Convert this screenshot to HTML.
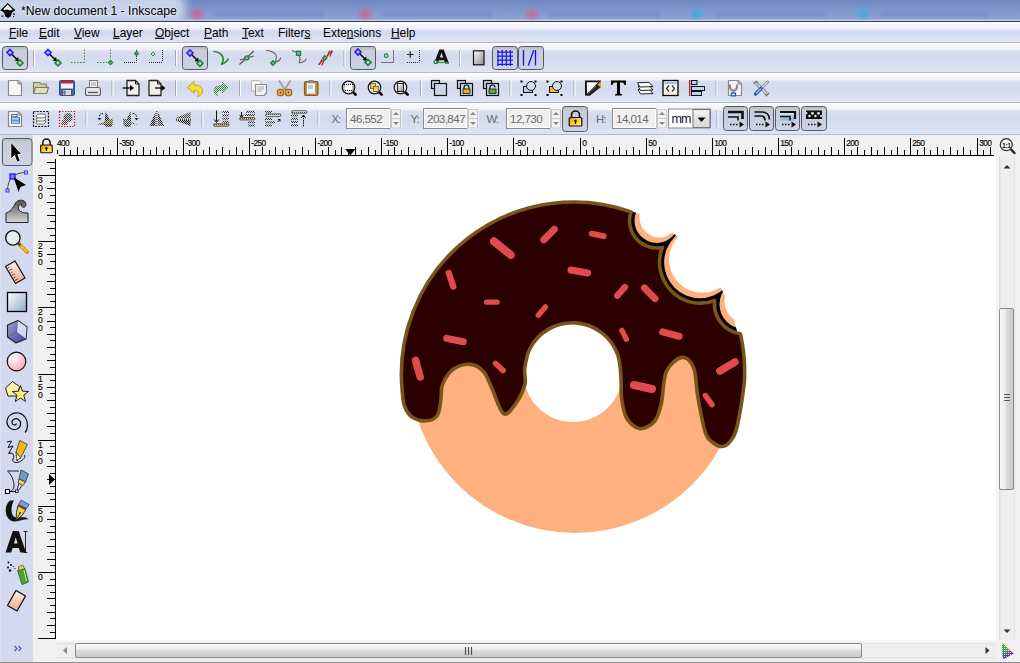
<!DOCTYPE html>
<html><head><meta charset="utf-8">
<style>
*{margin:0;padding:0;box-sizing:border-box}
html,body{width:1020px;height:663px;overflow:hidden;background:#f0f0f0;font-family:"Liberation Sans",sans-serif;position:relative}
.abs{position:absolute}
#title{left:0;top:0;width:1020px;height:22px;background:linear-gradient(#7088c2 0,#7f96cb 8px,#869cd0 15px,#8fa3d4 19px,#c3cfea 20px,#2f3749 21px,#3d4659 22px);overflow:hidden}
#title .glow{position:absolute;left:-20px;top:-6px;width:205px;height:30px;background:#c9d2e8;filter:blur(4px);border-radius:10px}
#title .blob{position:absolute;width:12px;height:10px;border-radius:50%;filter:blur(2.5px);top:9px}
#title .tab{position:absolute;top:12px;height:5px;background:#6d84bf;filter:blur(2px);opacity:.6}
.bar{position:absolute;left:0;width:1020px;background:linear-gradient(#fcfdfe 0,#eceff8 7px,#d8deef 8px,#d4daee 55%,#dfe5f5 100%);border-bottom:1px solid #b5bacb}
#menu{top:22px;height:21px}
#menu span{position:absolute;top:3px;font-size:12.5px;color:#000;white-space:nowrap}
#tb1{top:43px;height:30px}
#tb2{top:73px;height:30px}
#tb3{top:103px;height:32px}
.sep{position:absolute;width:2px;height:22px;background:linear-gradient(90deg,#a9aebb 50%,#fbfcff 50%)}
.btn{position:absolute;width:26px;height:24px;border:1px solid #5b5f68;border-radius:3px;background:linear-gradient(#e3e6ee,#c5cad8)}
#toolbox{left:0;top:135px;width:33px;height:528px;background:linear-gradient(90deg,#e4e8f6 0,#d3d9ee 1px,#d3d9ee 100%)}
#canvas{left:56px;top:157px;width:940px;height:483px;background:#fff}
.lbl{font-size:12px;color:#6b6b6b}
.inp{position:absolute;top:108px;height:21px;width:46px;background:#f0f0f0;border:1px solid #a9abb0;font-size:12.5px;color:#6e6e6e;padding:2px 0 0 3px}
.spin{position:absolute;top:108px;height:21px;width:11px;border:1px solid #c3c6cc;background:#f3f3f3}
svg{position:absolute;overflow:visible}
</style></head><body>
<div id="title" class="abs"><div class="glow"></div>
<div class="blob" style="left:191px;background:#c86a94"></div><div class="blob" style="left:359px;background:#c86a94"></div><div class="blob" style="left:526px;background:#c07098"></div>
<div class="blob" style="left:691px;background:#48a8d8"></div><div class="blob" style="left:857px;background:#48a8d8"></div>
<div class="tab" style="left:215px;width:110px"></div><div class="tab" style="left:383px;width:110px"></div><div class="tab" style="left:550px;width:110px"></div><div class="tab" style="left:715px;width:110px"></div><div class="tab" style="left:880px;width:110px"></div>
<div style="position:absolute;left:0;top:20px;width:1020px;height:1px;background:#c3cfea"></div><div style="position:absolute;left:0;top:21px;width:1020px;height:1px;background:#353d4f"></div>
</div>
<div id="menu" class="bar"></div>
<div id="tb1" class="bar"></div>
<div id="tb2" class="bar"></div>
<div id="tb3" class="bar"></div>
<div id="toolbox" class="abs"></div>
<div id="canvas" class="abs"></div>

<svg style="left:0;top:0" width="1020" height="663" viewBox="0 0 1020 663">
<defs><linearGradient id="bg" x1="0" y1="0" x2="0" y2="1"><stop offset="0" stop-color="#b9bdc7"/><stop offset=".22" stop-color="#cdd0d9"/><stop offset=".25" stop-color="#c6cbdf"/><stop offset="1" stop-color="#cdd2e4"/></linearGradient></defs>
<rect x="2.5" y="46.5" width="25.0" height="23.0" rx="3" fill="url(#bg)" stroke="#555a63" stroke-width="1"/>
<path d="M10.0 49.5 l3.0 3.0 l-3.0 3.0 l-3.0 -3.0 z" fill="#b4b4ff" stroke="#2222ee" stroke-width="1.6"/><path d="M12.0 54.5 L16.8 59.3" stroke="#000" stroke-width="1.4"/><path d="M19.0 61.5 L14.6 60.6 L18.1 57.1 Z" fill="#000"/><path d="M20.0 59.9 l3.0 3.0 l-3.0 3.0 l-3.0 -3.0 z" fill="#c8c8ff" stroke="#1f8a2a" stroke-width="1.6"/>
<rect x="33.0" y="50" width="1" height="16" fill="#a4a9b6"/><rect x="34.0" y="50" width="1" height="16" fill="#fcfdff"/>
<path d="M48.0 49.5 l3.0 3.0 l-3.0 3.0 l-3.0 -3.0 z" fill="#b4b4ff" stroke="#2222ee" stroke-width="1.6"/><path d="M50.0 54.5 L54.8 59.3" stroke="#000" stroke-width="1.4"/><path d="M57.0 61.5 L52.6 60.6 L56.1 57.1 Z" fill="#000"/><path d="M58.0 59.9 l3.0 3.0 l-3.0 3.0 l-3.0 -3.0 z" fill="#c8c8ff" stroke="#1f8a2a" stroke-width="1.6"/>
<g fill="none" stroke="#3a8a3a" stroke-width="1" stroke-dasharray="1.5 1.5"><path d="M71 62.5H84.5M84.5 49.5V62"/></g>
<g fill="none" stroke="#3a8a3a" stroke-width="1" stroke-dasharray="1.5 1.5"><path d="M97 62.5H107M110.5 49.5V59"/></g><path d="M110.5 60.3 l2.2 2.2 l-2.2 2.2 l-2.2 -2.2 z" fill="#a0a0a0" stroke="#1f8a2a" stroke-width="1.1"/>
<g fill="none" stroke="#222" stroke-width="1" stroke-dasharray="1 1"><path d="M124 62.5H136.5M136.5 50V62"/></g><path d="M136.5 51.5 l2.0 2.0 l-2.0 2.0 l-2.0 -2.0 z" fill="#9090c0" stroke="#1f8a2a" stroke-width="1.1"/>
<g fill="none" stroke="#222" stroke-width="1" stroke-dasharray="1 1"><path d="M149 62.5H162.5M162.5 50V62"/></g><path d="M153.0 52.0 l2.0 2.0 l-2.0 2.0 l-2.0 -2.0 z" fill="#e0e0ff" stroke="#1f8a2a" stroke-width="1.0"/>
<rect x="175.0" y="50" width="1" height="16" fill="#a4a9b6"/><rect x="176.0" y="50" width="1" height="16" fill="#fcfdff"/>
<rect x="182.5" y="46.5" width="25.0" height="23.0" rx="3" fill="url(#bg)" stroke="#555a63" stroke-width="1"/>
<path d="M190.0 50.0 l3.0 3.0 l-3.0 3.0 l-3.0 -3.0 z" fill="#b4b4ff" stroke="#2222ee" stroke-width="1.6"/><path d="M192.0 55.0 L196.8 59.8" stroke="#000" stroke-width="1.4"/><path d="M199.0 62.0 L194.6 61.1 L198.1 57.6 Z" fill="#000"/><path d="M200.0 60.4 l3.0 3.0 l-3.0 3.0 l-3.0 -3.0 z" fill="#c8c8ff" stroke="#1f8a2a" stroke-width="1.6"/>
<path d="M213.5 51.5C221 52 226 57.5 221.5 64.3C224 63.5 227 61.5 228.5 58.5" fill="none" stroke="#1a8c1a" stroke-width="1.6" stroke-linejoin="round"/>
<path d="M239.5 64.5L253.8 51M240 60L253.8 56" stroke="#555" stroke-width="1.1"/><circle cx="246.8" cy="57.9" r="2" fill="#9a9ae0" stroke="#1f8a2a" stroke-width="1.3"/>
<path d="M266 50.5C274 51 279 55 275 62M275 62C278 62 280 60 280.8 57.5" fill="none" stroke="#666" stroke-width="1.1"/><path d="M273.0 60.7 l2.3 2.3 l-2.3 2.3 l-2.3 -2.3 z" fill="#9a9ae0" stroke="#1f8a2a" stroke-width="1.3"/>
<path d="M292 50.5L298 52.8M299.5 63C304 62 306 60 306 58.5M298.5 55C301 58 300 61 299 63" fill="none" stroke="#666" stroke-width="1.1"/><rect x="296.5" y="51.3" width="4" height="4" fill="#9a9ae0" stroke="#1f8a2a" stroke-width="1.3"/>
<path d="M318.4 64.6L332.4 50.5" stroke="#555" stroke-width="1.1"/><g stroke="#e01010" stroke-width="1.2"><path d="M319.3 65L321.8 59.5M321.8 65.5L324.3 60M327.3 56L329.8 50.5M329.8 56.5L332.3 51"/></g><path d="M324.8 55.6 l2.2 2.2 l-2.2 2.2 l-2.2 -2.2 z" fill="#9a9ae0" stroke="#1f8a2a" stroke-width="1.3"/>
<rect x="343.5" y="50" width="1" height="16" fill="#a4a9b6"/><rect x="344.5" y="50" width="1" height="16" fill="#fcfdff"/>
<rect x="350.5" y="46.5" width="25.0" height="23.0" rx="3" fill="url(#bg)" stroke="#555a63" stroke-width="1"/>
<path d="M358.0 49.0 l3.0 3.0 l-3.0 3.0 l-3.0 -3.0 z" fill="#b4b4ff" stroke="#2222ee" stroke-width="1.6"/><path d="M360.0 54.0 L364.8 58.8" stroke="#000" stroke-width="1.4"/><path d="M367.0 61.0 L362.6 60.1 L366.1 56.6 Z" fill="#000"/><path d="M368.0 59.4 l3.0 3.0 l-3.0 3.0 l-3.0 -3.0 z" fill="#c8c8ff" stroke="#1f8a2a" stroke-width="1.6"/>
<path d="M381 62.5H394M393.5 50V63" fill="none" stroke="#777" stroke-width="1"/><circle cx="386.2" cy="55.7" r="1.8" fill="#c0c0ff" stroke="#1f8a2a" stroke-width="1.1"/>
<path d="M407 54.5H413.5M410.3 51.3V57.8" stroke="#222" stroke-width="1.2"/><g fill="none" stroke="#222" stroke-width="1" stroke-dasharray="1 1"><path d="M407 62.5H419.5M419.5 50V62"/></g>
<path d="M434 63.5L439.3 49.5H443.7L449 63.5H445.2L444.1 60.3H438.9L437.8 63.5ZM439.9 57.4H443.1L441.5 52.5Z" fill="#111" fill-rule="evenodd"/><path d="M435 62.5H448" stroke="#2a9a2a" stroke-width="1.2"/><circle cx="435.5" cy="62" r="1.6" fill="#c0c0ff" stroke="#1f8a2a" stroke-width="1.1"/>
<rect x="459.0" y="50" width="1" height="16" fill="#a4a9b6"/><rect x="460.0" y="50" width="1" height="16" fill="#fcfdff"/>
<defs><linearGradient id="pg" x1="0" y1="0" x2="1" y2="1"><stop offset="0" stop-color="#fff"/><stop offset="1" stop-color="#8a8a8a"/></linearGradient></defs><rect x="473.5" y="50.8" width="10.5" height="14" fill="url(#pg)" stroke="#111" stroke-width="1.2"/>
<rect x="492.5" y="46.5" width="25.0" height="23.0" rx="3" fill="url(#bg)" stroke="#555a63" stroke-width="1"/>
<g stroke="#1414f4" stroke-width="1.2"><path d="M498 50V66M502.2 50V66M506.3 50V66M510.4 50V66M497 52.2H513M497 56.2H513M497 60.2H513M497 64.4H513"/></g>
<rect x="518.5" y="46.5" width="25.0" height="23.0" rx="3" fill="url(#bg)" stroke="#555a63" stroke-width="1"/>
<g stroke="#1010f0" stroke-width="1.3"><path d="M523.5 50V65.5M535.5 50V65.5M528.3 65.5L533.7 50.3"/></g>
<path d="M8.5 80.5H18.0L21.5 84.0V95.5H8.5Z" fill="#f6f6f6" stroke="#8a8a8a" stroke-width="1.2" stroke-linejoin="round"/><path d="M18.0 80.5V84.0H21.5" fill="none" stroke="#8a8a8a" stroke-width="1"/>
<path d="M33.5 82.5H39.5L41 84H46.5V93.5H33.5Z" fill="#c9cda2" stroke="#7d805e" stroke-width="1.2"/><path d="M35.5 87.5H48.5L46.5 93.5H33.5Z" fill="#dde0bc" stroke="#7d805e" stroke-width="1.2" stroke-linejoin="round"/>
<rect x="59.5" y="80.5" width="15" height="15" rx="1.5" fill="#3d6ab8" stroke="#2a4f90"/><rect x="61" y="81" width="12" height="2.5" fill="#e8141c"/><rect x="61" y="83.5" width="12" height="5" fill="#f2f2f2"/><rect x="62.5" y="89.5" width="9" height="6" fill="#d8d8d8" stroke="#555" stroke-width="1"/><rect x="63.5" y="90.5" width="2" height="4" fill="#3d6ab8"/>
<rect x="89.5" y="80.5" width="8" height="8" fill="#f4f4f4" stroke="#777"/><path d="M91 83H96M91 85H96" stroke="#999" stroke-width="1"/><rect x="85.5" y="87.5" width="15" height="8" rx="2" fill="#e6e6e6" stroke="#666" stroke-width="1.2"/><path d="M88 92.5H98" stroke="#555" stroke-width="1.3"/>
<rect x="111.5" y="80" width="1" height="16" fill="#a4a9b6"/><rect x="112.5" y="80" width="1" height="16" fill="#fcfdff"/>
<path d="M127.0 80.5H135.5L139.0 84.0V95.5H127.0Z" fill="#f0efe8" stroke="#222" stroke-width="1.3" stroke-linejoin="round"/><path d="M135.5 80.5V84.0H139.0" fill="none" stroke="#222" stroke-width="1"/><path d="M122.5 88H131" stroke="#000" stroke-width="1.3"/><path d="M134 88L130 85V91Z" fill="#000"/>
<path d="M149.0 80.5H157.5L161.0 84.0V95.5H149.0Z" fill="#f0efe8" stroke="#222" stroke-width="1.3" stroke-linejoin="round"/><path d="M157.5 80.5V84.0H161.0" fill="none" stroke="#222" stroke-width="1"/><path d="M155 88H162" stroke="#000" stroke-width="1.3"/><path d="M165.5 88L161.5 85V91Z" fill="#000"/>
<rect x="175.0" y="80" width="1" height="16" fill="#a4a9b6"/><rect x="176.0" y="80" width="1" height="16" fill="#fcfdff"/>
<path d="M187.5 87.5L194 81.5V85C199 85 202.5 87 202.5 91C202.5 94 200 96 197.5 96.5C199.5 94.5 199 90.5 194 90.5V93.5Z" fill="#f3de38" stroke="#c6a60c" stroke-width="1" stroke-linejoin="round"/>
<defs><pattern id="chk" width="2" height="2" patternUnits="userSpaceOnUse"><rect width="1" height="1" fill="#3b8a2e"/><rect x="1" y="1" width="1" height="1" fill="#3b8a2e"/></pattern></defs><path d="M228.5 87.5L222 81.5V85C217 85 213.5 87 213.5 91C213.5 94 216 96 218.5 96.5C216.5 94.5 217 90.5 222 90.5V93.5Z" fill="url(#chk)"/>
<rect x="239.0" y="80" width="1" height="16" fill="#a4a9b6"/><rect x="240.0" y="80" width="1" height="16" fill="#fcfdff"/>
<path d="M251.5 80.5H259.5L261 82V91H251.5Z" fill="#f4f4f4" stroke="#b8b8b8"/><path d="M255.5 84.5H266.5V93L264 95.5H255.5Z" fill="#f2f2f2" stroke="#8a8a8a" stroke-width="1.2" stroke-linejoin="round"/><path d="M257.5 87H264M257.5 89H264M257.5 91H262" stroke="#aaa"/>
<path d="M279 80.5L285 90M290.5 80.5L284.5 90" stroke="#a0a0a0" stroke-width="1.8"/><rect x="277.5" y="89.5" width="6" height="6" rx="2" fill="#f0c070" stroke="#b06a14" stroke-width="1.5"/><rect x="285.5" y="89.5" width="6" height="6" rx="2" fill="#f0c070" stroke="#b06a14" stroke-width="1.5"/><circle cx="280.5" cy="92.5" r="1" fill="#6a3a00"/><circle cx="288.5" cy="92.5" r="1" fill="#6a3a00"/>
<rect x="304.5" y="81.5" width="13.5" height="14" rx="1.5" fill="#c4801e" stroke="#8c5a10" stroke-width="1.2"/><rect x="306.5" y="83" width="9" height="11" fill="#f4f4f4" stroke="#999" stroke-width=".8"/><rect x="308.5" y="80" width="5" height="2.5" fill="#888"/><path d="M308 86H313M308 88H313" stroke="#999"/>
<rect x="329.5" y="80" width="1" height="16" fill="#a4a9b6"/><rect x="330.5" y="80" width="1" height="16" fill="#fcfdff"/>
<path d="M352.5 91.5L355.7 94.7" stroke="#000" stroke-width="2.6" stroke-linecap="round"/><circle cx="348.5" cy="87.5" r="6.3" fill="#dfe6ee" stroke="#111" stroke-width="1.2"/><rect x="344" y="84.5" width="9" height="6" fill="#fff" stroke="#000" stroke-width="1" stroke-dasharray="1 1"/>
<path d="M378.5 91.5L381.7 94.7" stroke="#000" stroke-width="2.6" stroke-linecap="round"/><circle cx="374.5" cy="87.5" r="6.3" fill="#dfe6ee" stroke="#111" stroke-width="1.2"/><rect x="370.5" y="83.5" width="5" height="5" fill="#f8d040" stroke="#555" stroke-width=".8"/><rect x="373.5" y="86.5" width="5" height="5" fill="#f8d040" stroke="#555" stroke-width=".8"/>
<path d="M404.5 91.5L407.7 94.7" stroke="#000" stroke-width="2.6" stroke-linecap="round"/><circle cx="400.5" cy="87.5" r="6.3" fill="#dfe6ee" stroke="#111" stroke-width="1.2"/><rect x="397.5" y="83.5" width="6" height="8" fill="url(#pg)" stroke="#222" stroke-width="1"/>
<rect x="420.0" y="80" width="1" height="16" fill="#a4a9b6"/><rect x="421.0" y="80" width="1" height="16" fill="#fcfdff"/>
<rect x="431.5" y="80.5" width="8" height="8" fill="#b9cfe6" stroke="#111" stroke-width="1.2"/><rect x="434.5" y="83.5" width="12" height="12" fill="#c8d8ea" stroke="#111" stroke-width="1.2"/>
<rect x="457.5" y="80.5" width="8" height="8" fill="#b9cfe6" stroke="#111" stroke-width="1.2"/><rect x="460.5" y="83.5" width="12" height="12" fill="#c8d8ea" stroke="#111" stroke-width="1.2"/><path d="M464 89V87.5A2.5 2.5 0 0 1 469 87.5V89" fill="none" stroke="#111" stroke-width="1.2"/><rect x="463" y="89" width="7" height="4.5" fill="#f0b020" stroke="#111" stroke-width=".8"/>
<rect x="483.5" y="80.5" width="8" height="8" fill="#b9cfe6" stroke="#111" stroke-width="1.2"/><rect x="486.5" y="83.5" width="12" height="12" fill="#c8d8ea" stroke="#111" stroke-width="1.2"/><path d="M490 89V87.5A2.5 2.5 0 0 1 495 87.5" fill="none" stroke="#111" stroke-width="1.2"/><rect x="489" y="89" width="7" height="4.5" fill="#60b040" stroke="#111" stroke-width=".8"/>
<rect x="509.5" y="80" width="1" height="16" fill="#a4a9b6"/><rect x="510.5" y="80" width="1" height="16" fill="#fcfdff"/>
<rect x="523.5" y="86.5" width="9" height="6" fill="#b9cfe6" stroke="#111" stroke-width="1"/><circle cx="531" cy="86" r="4.5" fill="#cfdceb" stroke="#111" stroke-width="1"/><g fill="#000"><rect x="520.5" y="80.5" width="2" height="2"/><rect x="534.5" y="80.5" width="2" height="2"/><rect x="520.5" y="94" width="2" height="2"/><rect x="534.5" y="94" width="2" height="2"/></g>
<rect x="549.5" y="86.5" width="9" height="6" fill="#f0c030" stroke="#111" stroke-width="1"/><circle cx="557" cy="86" r="4.5" fill="#cfdceb" stroke="#111" stroke-width="1"/><g fill="#000"><rect x="546.5" y="80.5" width="2" height="2"/><rect x="560.5" y="80.5" width="2" height="2"/><rect x="546.5" y="94" width="2" height="2"/><rect x="560.5" y="94" width="2" height="2"/></g>
<rect x="573.5" y="80" width="1" height="16" fill="#a4a9b6"/><rect x="574.5" y="80" width="1" height="16" fill="#fcfdff"/>
<defs><linearGradient id="fsg" x1="0" y1="0" x2="1" y2="1"><stop offset="0" stop-color="#fff"/><stop offset=".6" stop-color="#f4f4f4"/><stop offset="1" stop-color="#888"/></linearGradient></defs><path d="M585 80.5H601V85L590 95.5H585Z" fill="#111"/><path d="M586.8 82.3H598.5L587 93.8Z" fill="url(#fsg)"/><path d="M586 95.5L598 84.5L601 87L590 95.5Z" fill="#222"/><path d="M589 92.5L596 86" stroke="#888" stroke-width=".8"/><path d="M597.5 84.5L601 81V88Z" fill="#f5a000"/>
<path d="M611 80.5H626V85H624.5C624 83 623 82.5 621 82.5H620V93.5L622 94.5V95.5H615V94.5L617 93.5V82.5H616C614 82.5 613 83 612.5 85H611Z" fill="#000"/>
<g fill="#fbfbfb" stroke="#222" stroke-width="1" stroke-linejoin="round"><path d="M638 89.5L649 89L653 93.5L640.5 94Z"/><path d="M638 86L649 85.5L653 90L640.5 90.5Z"/><path d="M637.5 82.8L649 82.3L653 86.6L640 87Z"/></g>
<rect x="663" y="80.5" width="15" height="15" fill="#f4f2ea" stroke="#000" stroke-width="1.3"/><rect x="664.3" y="81.8" width="12.4" height="2.2" fill="#9cc0e8"/><path d="M669 85.5L666.5 88.5L669 91.5M672 85.5L674.5 88.5L672 91.5" fill="none" stroke="#333" stroke-width="1.2"/>
<rect x="689" y="80" width="1.3" height="16" fill="#e01010"/><rect x="691.5" y="80.5" width="5.5" height="4" fill="#bcd4ee" stroke="#111" stroke-width="1"/><rect x="691.5" y="86.5" width="13" height="4" fill="#bcd4ee" stroke="#111" stroke-width="1"/><rect x="691.5" y="91.5" width="10" height="4" fill="#bcd4ee" stroke="#111" stroke-width="1"/>
<rect x="715.5" y="80" width="1" height="16" fill="#a4a9b6"/><rect x="716.5" y="80" width="1" height="16" fill="#fcfdff"/>
<path d="M728.5 80.5H738.0L741.5 84.0V95.5H728.5Z" fill="#f4f4f2" stroke="#8a8a8a" stroke-width="1.2" stroke-linejoin="round"/><path d="M738.0 80.5V84.0H741.5" fill="none" stroke="#8a8a8a" stroke-width="1"/><path d="M730 84.5V87A3.5 3.5 0 0 0 737 87V84.5" fill="none" stroke="#8a8a8a" stroke-width="2.2"/><path d="M733.5 90V94" stroke="#9a9a9a" stroke-width="2.6"/><path d="M731.5 93.2H735.5V95.8H731.5Z" fill="#fff" stroke="#2255bb" stroke-width="1.3"/>
<path d="M756.5 83.5L766.5 93.5" stroke="#7a7a7a" stroke-width="3.2"/><path d="M756.5 83.5L766.5 93.5" stroke="#dcdcd4" stroke-width="1.6"/><path d="M753.5 84L756 81.5L758 83M769 93L766.5 95.5L765 94" fill="none" stroke="#7a7a7a" stroke-width="1.6"/><path d="M767.5 82L762 87.5" stroke="#888" stroke-width="2.8" stroke-linecap="round"/><path d="M767.5 82L762 87.5" stroke="#e0e0e0" stroke-width="1.2"/><path d="M761 88.5L755.5 94" stroke="#2a5ec0" stroke-width="3.6" stroke-linecap="round"/><path d="M760.5 89L756.5 93" stroke="#9cc0ee" stroke-width="1.2" stroke-linecap="round"/>
<defs><pattern id="ck" width="2" height="2" patternUnits="userSpaceOnUse"><rect width="2" height="2" fill="#8a8a8a" opacity=".35"/><rect width="1" height="1" fill="#151515"/><rect x="1" y="1" width="1" height="1" fill="#151515"/></pattern><pattern id="ckl" width="2" height="2" patternUnits="userSpaceOnUse"><rect width="2" height="2" fill="#cfcfcf"/><rect width="1" height="1" fill="#444"/><rect x="1" y="1" width="1" height="1" fill="#444"/></pattern><pattern id="cky" width="2" height="2" patternUnits="userSpaceOnUse"><rect width="2" height="2" fill="#e8d090"/><rect width="1" height="1" fill="#444"/><rect x="1" y="1" width="1" height="1" fill="#555"/></pattern></defs>
<path d="M8.5 111.5H18.0L21.5 115.0V126.5H8.5Z" fill="#f6f6f6" stroke="#888" stroke-width="1.2" stroke-linejoin="round"/><path d="M18.0 111.5V115.0H21.5" fill="none" stroke="#888" stroke-width="1"/><g fill="#f4f8ff" stroke="#3a6cc0" stroke-width="1"><rect x="11.5" y="114.5" width="5.5" height="2.2"/><rect x="11.5" y="117.8" width="8" height="2.2"/><rect x="11.5" y="121" width="8" height="2.2"/></g>
<rect x="33.5" y="111.5" width="15" height="15" fill="none" stroke="#111" stroke-width="1.2" stroke-dasharray="2 1.2"/><g fill="#f8f8f8" stroke="#666" stroke-width=".9"><path d="M36 122L38 120H45L46 122L44 124H37Z"/><path d="M36 119L38 117H45L46 119L44 121H37Z"/><path d="M36 116L38 114H45L46 116L44 118H37Z"/></g>
<rect x="59.5" y="111.5" width="15" height="15" fill="none" stroke="#b01010" stroke-width="1.2" stroke-dasharray="1.2 1.6"/><path d="M61 125L62 120L66 119L68 125Z" fill="url(#cky)"/><circle cx="68" cy="117.5" r="4.5" fill="url(#ckl)"/>
<rect x="85.5" y="111" width="1" height="16" fill="#a4a9b6"/><rect x="86.5" y="111" width="1" height="16" fill="#fcfdff"/>
<path d="M105.6 111.2L110 120.5L104.5 123.5Z" fill="url(#ck)"/><path d="M96.5 124.5L103 122.5L112.8 118.2V124.2L105 125Z" fill="url(#cky)"/><path d="M104.5 124H112.5L111.5 126.8H106Z" fill="url(#ck)"/><path d="M103 113.5C100.5 113.2 99.5 114.5 99.5 117" fill="none" stroke="#222" stroke-width="1" stroke-dasharray="1.2 .6"/><path d="M97.5 118L99.5 120.2L101.5 118Z" fill="#222"/>
<path d="M130.6 111.2L131.2 123.5L125 123Z" fill="url(#ck)"/><path d="M123 118.5L131 120.5V125.5H123.5Z" fill="url(#ckl)"/><path d="M129.5 123L138 125L131 122Z" fill="url(#ck)"/><path d="M124 125H131L130.5 126.8H125Z" fill="url(#ck)"/><path d="M132.5 113.5C135 113.2 136.5 114.5 136.5 117" fill="none" stroke="#222" stroke-width="1" stroke-dasharray="1.2 .6"/><path d="M134.5 118L136.5 120.2L138.5 118Z" fill="#222"/>
<path d="M155.5 112L149.5 126H155.5Z" fill="url(#ck)"/><path d="M158 112L164 126H158Z" fill="url(#ck)"/><path d="M158.5 118L162 126H158.5Z" fill="url(#cky)"/><path d="M156.8 111V127" stroke="#222" stroke-dasharray="1 1"/>
<path d="M190.5 112L176.5 117.5V118.5H190.5Z" fill="url(#ckl)"/><path d="M190.5 126L176.5 121V120H190.5Z" fill="url(#ck)"/><path d="M176 119.3H191" stroke="#222" stroke-dasharray="1 1"/>
<rect x="201.5" y="111" width="1" height="16" fill="#a4a9b6"/><rect x="202.5" y="111" width="1" height="16" fill="#fcfdff"/>
<defs><pattern id="ckm" width="2" height="2" patternUnits="userSpaceOnUse"><rect width="1" height="1" fill="#2a2a2a"/><rect x="1" y="1" width="1" height="1" fill="#2a2a2a"/></pattern><pattern id="ckw" width="2" height="2" patternUnits="userSpaceOnUse"><rect width="2" height="2" fill="#f4f4f4"/><rect width="1" height="1" fill="#555"/></pattern><pattern id="cko" width="2" height="2" patternUnits="userSpaceOnUse"><rect width="2" height="2" fill="#e8c860"/><rect width="1" height="1" fill="#555"/></pattern></defs>
<path d="M216.5 110.5V121.5" stroke="#111" stroke-width="1"/><path d="M214.3 119.5L216.5 122.5L218.7 119.5" fill="none" stroke="#111" stroke-width="1"/><rect x="222.5" y="111.0" width="6.5" height="2" fill="url(#ckm)"/><rect x="222.5" y="114.3" width="6.5" height="2" fill="url(#ckm)"/><rect x="222.5" y="117.6" width="6.5" height="2" fill="url(#ckm)"/><rect x="222.5" y="120.8" width="6.5" height="2" fill="url(#ckm)"/><rect x="213.5" y="123.8" width="15.5" height="2.4" rx="1.2" fill="url(#cko)" stroke="#3a3a3a" stroke-width=".8"/>
<path d="M241.5 112V116.5" stroke="#111"/><path d="M239.8 115L241.5 117.5L243.2 115" fill="none" stroke="#111"/><rect x="246.0" y="110.8" width="9.0" height="2" fill="url(#ckm)"/><rect x="244.5" y="114.0" width="10.5" height="2" fill="url(#ckm)"/><rect x="239.5" y="117.5" width="15.5" height="2.4" rx="1.2" fill="url(#cko)" stroke="#3a3a3a" stroke-width=".8"/><rect x="248.0" y="121.3" width="7.0" height="2" fill="url(#ckm)"/><rect x="248.0" y="124.5" width="7.0" height="2" fill="url(#ckm)"/>
<rect x="265.0" y="110.8" width="7.0" height="2" fill="url(#ckm)"/><rect x="265.5" y="114.0" width="15.5" height="2.4" rx="1.2" fill="url(#ckw)" stroke="#3a3a3a" stroke-width=".8"/><rect x="265.0" y="118.0" width="7.0" height="2" fill="url(#ckm)"/><rect x="265.0" y="121.3" width="10.0" height="2" fill="url(#ckm)"/><rect x="265.0" y="124.5" width="7.0" height="2" fill="url(#ckm)"/><path d="M277.5 122L280 119.5M278 119.5H280V121.5" fill="none" stroke="#111" stroke-width="1"/>
<rect x="291.5" y="110.8" width="15.5" height="2.4" rx="1.2" fill="url(#ckw)" stroke="#3a3a3a" stroke-width=".8"/><rect x="291.0" y="114.5" width="7.0" height="2" fill="url(#ckm)"/><rect x="291.0" y="117.8" width="7.0" height="2" fill="url(#ckm)"/><rect x="291.0" y="121.0" width="7.0" height="2" fill="url(#ckm)"/><rect x="291.0" y="124.3" width="7.0" height="2" fill="url(#ckm)"/><path d="M303.5 115.5V127" stroke="#111" stroke-width="1" stroke-dasharray="1.5 .8"/><path d="M301.3 118L303.5 115L305.7 118" fill="none" stroke="#111" stroke-width="1"/>
<rect x="317.5" y="111" width="1" height="16" fill="#a4a9b6"/><rect x="318.5" y="111" width="1" height="16" fill="#fcfdff"/>
<defs><linearGradient id="rg" x1="0" y1="0" x2="1" y2="1"><stop offset="0" stop-color="#fdfdff"/><stop offset="1" stop-color="#8eacc8"/></linearGradient><radialGradient id="cg" cx=".35" cy=".3" r=".8"><stop offset="0" stop-color="#fff"/><stop offset="1" stop-color="#f5a0aa"/></radialGradient><linearGradient id="wg" x1="0" y1="0" x2="0" y2="1"><stop offset="0" stop-color="#505050"/><stop offset="1" stop-color="#d8d8d8"/></linearGradient><linearGradient id="eg" x1="0" y1="0" x2="0" y2="1"><stop offset="0" stop-color="#fdf0e8"/><stop offset="1" stop-color="#f0a888"/></linearGradient><linearGradient id="bx" x1="0" y1="0" x2="1" y2="1"><stop offset="0" stop-color="#9ea0d8"/><stop offset="1" stop-color="#3e3e90"/></linearGradient></defs>
<rect x="2.5" y="138.5" width="29.5" height="27.0" rx="3" fill="url(#bg)" stroke="#555a63" stroke-width="1"/>
<path d="M10.8 142V159L14.6 155.5L17 162.3L20.3 160.8L17.8 154.5H22Z" fill="#000" stroke="#fff" stroke-width=".9" stroke-linejoin="round"/>
<path d="M12.5 176.5C9 180 7.5 185 7.5 190.5M12.5 176.5C17 173.5 21 172.5 26 172.5" fill="none" stroke="#444" stroke-width="1"/><rect x="10" y="174" width="5" height="5" fill="#8080ff" stroke="#1515ee" stroke-width="1.3"/><rect x="24.5" y="171" width="3" height="3" fill="#c0c0ff" stroke="#3030f0" stroke-width=".9"/><rect x="6" y="189" width="3" height="3" fill="#c0c0ff" stroke="#3030f0" stroke-width=".9"/><path d="M13.5 177L26 185L20.5 187L18.5 192Z" fill="#000"/>
<path d="M6 222.5V213C10 212 13 208 15 204C17 200 21 199.5 24 201C26.5 202.5 26.5 206 24.5 207C23 208 20.5 206 22 204.5C19 204 17.5 207 19 210C20.5 212.5 24 213 28 213V222.5Z" fill="url(#wg)" stroke="#222" stroke-width="1"/>
<path d="M19.5 244.5L27 252" stroke="#d08a00" stroke-width="3.8" stroke-linecap="round"/><path d="M20.5 245.5L26.5 251.5" stroke="#f8c020" stroke-width="2.2" stroke-linecap="round"/><path d="M17.5 242.5L20.5 245.5" stroke="#555" stroke-width="2.5"/><circle cx="12.9" cy="237.9" r="7.2" fill="#e6eef4" stroke="#111" stroke-width="1.3"/>
<path d="M5.5 266.5L15 261L25 278L15.5 283.5Z" fill="url(#eg)" stroke="#111" stroke-width="1.2" stroke-linejoin="round"/><path d="M7.5 268L9.5 267M9 270.5L12 268.8M10.5 273L12.5 271.8M12 275.5L15 273.8M13.5 278L15.5 276.8M15 280.5L18 278.8" stroke="#333" stroke-width=".8"/>
<rect x="7.5" y="292.5" width="19" height="19" fill="url(#rg)" stroke="#000" stroke-width="1.3"/>
<path d="M7.5 325L18 320.5L27 327L26 339L16 343L7.5 337Z" fill="url(#bx)" stroke="#222" stroke-width="1.1" stroke-linejoin="round"/><path d="M18 320.5L16.5 332L26 339M16.5 332L7.5 337" fill="none" stroke="#555" stroke-width=".5"/><path d="M18 321L26.5 327L25.8 338.5L17 332Z" fill="#d8d8f0"/>
<circle cx="16.5" cy="361.5" r="9.3" fill="url(#cg)" stroke="#111" stroke-width="1.2"/>
<path d="M5.5 388L12.5 381.5L19.5 386.5L17.5 396H8Z" fill="#fbf2a8" stroke="#222" stroke-width="1" stroke-linejoin="round"/><path d="M20.5 385.5L22.5 391.2L28.5 391.5L23.8 395.2L25.5 401.5L20.5 398L15.2 401.5L17 395.2L12.3 391.5L18.5 391.2Z" fill="#fbef80" stroke="#222" stroke-width="1" stroke-linejoin="round"/>
<path d="M16.5 423.5C16 425.5 12.5 425.5 12 423C11.5 419.5 15.5 417.5 18.5 419.5C22 422 21 427.5 17 429C12 431 7 427 7 422C7 416 12.5 412 18.5 413C24.5 414 27.5 420 27.5 425C27.5 429 26.5 431 25 432.5" fill="none" stroke="#111" stroke-width="1.2"/>
<path d="M7 442L11.5 441L8 447.5L13 446L8.5 453.5C12 452 15.5 455 13 459C11.5 462 16 464 21 461C24 459 25.5 457 24.5 455" fill="none" stroke="#111" stroke-width="1"/><path d="M19.8 440.5L27.5 444.5L20 459L16 452Z" fill="#f8b818" stroke="#333" stroke-width=".8"/><path d="M16 452L20.5 457.5L17 461Z" fill="#fff8e0" stroke="#333" stroke-width=".8"/><path d="M16.5 459.5L17 461L18.2 459.8Z" fill="#000"/>
<path d="M7.5 471H19M7.5 471C11 474 14 480 14 486C14 489 12 491 10 491.5" fill="none" stroke="#222" stroke-width="1"/><rect x="5.5" y="489.5" width="4" height="4" fill="#fff" stroke="#000" stroke-width="1"/><path d="M9.5 491.5H16" stroke="#000"/><rect x="15.5" y="490" width="2.5" height="2.5" fill="#fff" stroke="#000" stroke-width=".8"/><path d="M21 470L28.5 474L25.5 482L19 479Z" fill="#6a9ec8" stroke="#333" stroke-width=".8"/><path d="M19 479L25.5 482L23 485.5L18 483Z" fill="#f0d070" stroke="#333" stroke-width=".8"/><path d="M19 483.5L17 490M22 485.5L18.5 490.5" stroke="#333" stroke-width="1"/>
<path d="M10 500.5C5.5 504 4.5 511 7 516.5C9 520.5 13 522.5 18 521C22 520 25 518.5 29 519.5C26 516.5 22 516.5 18.5 517.5C14 518.5 11.5 515 11.5 510C11.5 506 12.5 503 14 500.5Z" fill="#111"/><path d="M21 500L29 504.5L26.5 508.5L18.5 504.5Z" fill="#6aa8d8" stroke="#333" stroke-width=".7"/><path d="M18.5 504.5L26.5 508.5L25.8 509.8L17.8 505.8Z" fill="#d81818"/><path d="M17.8 505.8L25.8 509.8L22 515.5L16 520.5L16.5 512.5Z" fill="#f2cc50" stroke="#222" stroke-width=".9" stroke-linejoin="round"/><path d="M16.2 520L20 513" stroke="#222" stroke-width=".8"/><circle cx="20.2" cy="512.8" r=".9" fill="#222"/>
<path d="M5.5 552.5L12.8 531H18.8L26 552.5H20.3L18.9 548H12.6L11.2 552.5ZM13.9 543.5H17.6L15.75 537.2Z" fill="#111" fill-rule="evenodd"/><path d="M25.5 531.5V552.5M23.5 531.5H27.5M23.5 552.5H27.5" stroke="#111" stroke-width=".9"/>
<g fill="#111"><circle cx="8.5" cy="562.5" r="1"/><circle cx="11" cy="565" r="1"/><circle cx="8" cy="567.5" r="1.1"/><circle cx="10" cy="570.5" r="1.3"/><circle cx="13.5" cy="566.5" r=".6"/><circle cx="15" cy="568.5" r=".6"/></g><path d="M17.5 570.5L25 568.5L28.5 582L22 584.5Z" fill="#4aa23a" stroke="#2a5a20" stroke-width=".8"/><path d="M18.5 566.5L23 565.2L24.5 569L18.8 570.5Z" fill="#e8d040" stroke="#333" stroke-width=".6"/><path d="M24 570L26.5 581" stroke="#b8f0a0" stroke-width="1"/>
<path d="M7.5 605.5L16 590.5L25.5 596L17 611Z" fill="url(#eg)" stroke="#111" stroke-width="1.3" stroke-linejoin="round"/>
<path d="M14.5 646L17 648.5L14.5 651M18.5 646L21 648.5L18.5 651" fill="none" stroke="#5b5ba8" stroke-width="1.3"/>
<text x="331.5" y="123.2" font-family="Liberation Sans" font-size="11.3" fill="#6a6a6a" letter-spacing="-1">X:</text><rect x="346.5" y="108.5" width="44" height="20" fill="#f0f0f0" stroke="#8d8d8d"/><rect x="347.5" y="109.5" width="42" height="18" fill="none" stroke="#fff"/><text x="350.0" y="123.2" font-family="Liberation Sans" font-size="11.6" fill="#6a6a6a" letter-spacing="-.55">46,552</text><rect x="391.0" y="108.5" width="10" height="20" fill="#fff" stroke="#fff"/><rect x="391.5" y="109.5" width="9" height="9" fill="#f2f2f2" stroke="#c8c8c8"/><rect x="391.5" y="118.5" width="9" height="9.5" fill="#f2f2f2" stroke="#c8c8c8"/><path d="M393.0 115L396.0 112L399.0 115Z" fill="#8a8a8a"/><path d="M393.0 122L396.0 125L399.0 122Z" fill="#8a8a8a"/>
<text x="410.5" y="123.2" font-family="Liberation Sans" font-size="11.3" fill="#6a6a6a" letter-spacing="-1">Y:</text><rect x="423.5" y="108.5" width="44" height="20" fill="#f0f0f0" stroke="#8d8d8d"/><rect x="424.5" y="109.5" width="42" height="18" fill="none" stroke="#fff"/><text x="427.0" y="123.2" font-family="Liberation Sans" font-size="11.6" fill="#6a6a6a" letter-spacing="-.55">203,847</text><rect x="468.0" y="108.5" width="10" height="20" fill="#fff" stroke="#fff"/><rect x="468.5" y="109.5" width="9" height="9" fill="#f2f2f2" stroke="#c8c8c8"/><rect x="468.5" y="118.5" width="9" height="9.5" fill="#f2f2f2" stroke="#c8c8c8"/><path d="M470.0 115L473.0 112L476.0 115Z" fill="#8a8a8a"/><path d="M470.0 122L473.0 125L476.0 122Z" fill="#8a8a8a"/>
<text x="486.5" y="123.2" font-family="Liberation Sans" font-size="11.3" fill="#6a6a6a" letter-spacing="-1">W:</text><rect x="506.5" y="108.5" width="44" height="20" fill="#f0f0f0" stroke="#8d8d8d"/><rect x="507.5" y="109.5" width="42" height="18" fill="none" stroke="#fff"/><text x="510.0" y="123.2" font-family="Liberation Sans" font-size="11.6" fill="#6a6a6a" letter-spacing="-.55">12,730</text><rect x="551.0" y="108.5" width="10" height="20" fill="#fff" stroke="#fff"/><rect x="551.5" y="109.5" width="9" height="9" fill="#f2f2f2" stroke="#c8c8c8"/><rect x="551.5" y="118.5" width="9" height="9.5" fill="#f2f2f2" stroke="#c8c8c8"/><path d="M553.0 115L556.0 112L559.0 115Z" fill="#8a8a8a"/><path d="M553.0 122L556.0 125L559.0 122Z" fill="#8a8a8a"/>
<rect x="562.5" y="106.5" width="25.0" height="25.0" rx="3" fill="url(#bg)" stroke="#555a63" stroke-width="1"/>
<g transform="translate(568.5 110.5) scale(1.00)"><path d="M3 7V4.5A4 4 0 0 1 11 4.5V7" fill="none" stroke="#111" stroke-width="1.6"/><defs><linearGradient id="lk568" x1="0" y1="0" x2="1" y2="1"><stop offset="0" stop-color="#ff8000"/><stop offset=".45" stop-color="#ffc830"/><stop offset="1" stop-color="#fff49a"/></linearGradient></defs><rect x=".7" y="7" width="12.6" height="8.5" rx="1" fill="url(#lk568)" stroke="#111" stroke-width="1.2"/><circle cx="7" cy="10.5" r="1.3" fill="#111"/><rect x="6.4" y="10.5" width="1.2" height="3" fill="#111"/></g>
<text x="596.0" y="123.2" font-family="Liberation Sans" font-size="11.3" fill="#6a6a6a" letter-spacing="-1">H:</text><rect x="612.5" y="108.5" width="44" height="20" fill="#f0f0f0" stroke="#8d8d8d"/><rect x="613.5" y="109.5" width="42" height="18" fill="none" stroke="#fff"/><text x="616.0" y="123.2" font-family="Liberation Sans" font-size="11.6" fill="#6a6a6a" letter-spacing="-.55">14,014</text><rect x="657.0" y="108.5" width="10" height="20" fill="#fff" stroke="#fff"/><rect x="657.5" y="109.5" width="9" height="9" fill="#f2f2f2" stroke="#c8c8c8"/><rect x="657.5" y="118.5" width="9" height="9.5" fill="#f2f2f2" stroke="#c8c8c8"/><path d="M659.0 115L662.0 112L665.0 115Z" fill="#8a8a8a"/><path d="M659.0 122L662.0 125L665.0 122Z" fill="#8a8a8a"/>
<rect x="668.5" y="109" width="42" height="19" fill="#fff" stroke="#8d8d8d"/><rect x="693" y="109.5" width="17" height="18" fill="#e0e0e0" stroke="#777"/><rect x="694" y="110.5" width="15" height="16" fill="url(#dd)"/><defs><linearGradient id="dd" x1="0" y1="0" x2="0" y2="1"><stop offset="0" stop-color="#f2f2f2"/><stop offset="1" stop-color="#d6d6d6"/></linearGradient></defs><path d="M697.5 117.5H705.5L701.5 122Z" fill="#000"/><text x="671.5" y="123.3" font-family="Liberation Sans" font-size="12.5" fill="#1a0f30" letter-spacing="-0.9">mm</text>
<rect x="716.5" y="110" width="1" height="18" fill="#a4a9b6"/><rect x="717.5" y="110" width="1" height="18" fill="#fcfdff"/>
<rect x="723.5" y="106.5" width="24.0" height="24.0" rx="3" fill="url(#bg)" stroke="#555a63" stroke-width="1"/><rect x="749.5" y="106.5" width="24.0" height="24.0" rx="3" fill="url(#bg)" stroke="#555a63" stroke-width="1"/><rect x="775.5" y="106.5" width="24.0" height="24.0" rx="3" fill="url(#bg)" stroke="#555a63" stroke-width="1"/><rect x="801.5" y="106.5" width="25.0" height="24.0" rx="3" fill="url(#bg)" stroke="#555a63" stroke-width="1"/>
<path d="M728 112H742.5V119" fill="none" stroke="#111" stroke-width="2.6"/><path d="M728 117H738V120.5" fill="none" stroke="#111" stroke-width="1.6"/><path d="M730.0 124.5H739.0" stroke="#111" stroke-width="1.5" stroke-dasharray="1.5 1.5"/><path d="M744.0 124.5L739.5 121.5V127.5Z" fill="#111"/>
<path d="M754.5 112H762C766.5 112 769.5 115 769.5 119.5M754.5 116H761C763.5 116 765 118 765 120.5" fill="none" stroke="#111" stroke-width="1.7"/><path d="M756.0 124.5H765.0" stroke="#111" stroke-width="1.5" stroke-dasharray="1.5 1.5"/><path d="M770.0 124.5L765.5 121.5V127.5Z" fill="#111"/>
<defs><linearGradient id="b3g" x1="0" y1="0" x2="0" y2="1"><stop offset="0" stop-color="#d8ecfa"/><stop offset="1" stop-color="#8ab0d0"/></linearGradient></defs><rect x="780" y="112.5" width="14" height="8" fill="url(#b3g)"/><path d="M780 112H795V119" fill="none" stroke="#111" stroke-width="2.2"/><path d="M780 116.5H790V120.5" fill="none" stroke="#111" stroke-width="1.6"/><path d="M782.0 124.5H791.0" stroke="#111" stroke-width="1.5" stroke-dasharray="1.5 1.5"/><path d="M796.0 124.5L791.5 121.5V127.5Z" fill="#111"/>
<rect x="806" y="110.5" width="16" height="8.5" fill="#111"/><g fill="#f4f4f4"><circle cx="812.5" cy="113.3" r="1.4"/><circle cx="818.5" cy="113.3" r="1.4"/><circle cx="809.5" cy="116" r="1.2"/><circle cx="815.5" cy="116" r="1.2"/><circle cx="821" cy="116" r="1"/><circle cx="806.5" cy="113.3" r="1"/></g><path d="M808.0 124.5H817.0" stroke="#111" stroke-width="1.5" stroke-dasharray="1.5 1.5"/><path d="M822.0 124.5L817.5 121.5V127.5Z" fill="#111"/>
<g transform="translate(40.0 138.5) scale(0.92)"><path d="M3 7V4.5A4 4 0 0 1 11 4.5V7" fill="none" stroke="#111" stroke-width="1.6"/><defs><linearGradient id="lk40" x1="0" y1="0" x2="1" y2="1"><stop offset="0" stop-color="#ff8000"/><stop offset=".45" stop-color="#ffc830"/><stop offset="1" stop-color="#fff49a"/></linearGradient></defs><rect x=".7" y="7" width="12.6" height="8.5" rx="1" fill="url(#lk40)" stroke="#111" stroke-width="1.2"/><circle cx="7" cy="10.5" r="1.3" fill="#111"/><rect x="6.4" y="10.5" width="1.2" height="3" fill="#111"/></g>
<path d="M350.3 155.5L345.3 149H355.3Z" fill="#000"/>
<path d="M55 479.5L49 474V485Z" fill="#000"/>
<path d="M1010.5 149L1014.5 153" stroke="#222" stroke-width="2.4" stroke-linecap="round"/><circle cx="1006.3" cy="144.7" r="6" fill="#f2f2f2" stroke="#333" stroke-width="1.2"/><text x="1006.3" y="147.5" font-family="Liberation Sans" font-size="7" font-weight="bold" fill="#222" text-anchor="middle" letter-spacing="-.5">1:1</text>
<defs><linearGradient id="vth" x1="0" y1="0" x2="1" y2="0"><stop offset="0" stop-color="#f8f8f8"/><stop offset=".45" stop-color="#ececec"/><stop offset=".5" stop-color="#dadadc"/><stop offset="1" stop-color="#cacace"/></linearGradient><linearGradient id="hth" x1="0" y1="0" x2="0" y2="1"><stop offset="0" stop-color="#f8f8f8"/><stop offset=".45" stop-color="#ececec"/><stop offset=".5" stop-color="#dadadc"/><stop offset="1" stop-color="#cacace"/></linearGradient></defs>
<rect x="999" y="157" width="15.5" height="483" fill="#eeeeee"/><rect x="999" y="157" width="1" height="483" fill="#dcdcdc"/><rect x="1000" y="157" width="1" height="483" fill="#e6e6e6"/><rect x="1014" y="157" width="1" height="483" fill="#e2e2e2"/><rect x="997" y="157" width="2" height="483" fill="#f6f6f6"/>
<path d="M1003.5 168.5L1007 165L1010.5 168.5Z" fill="#333"/><path d="M1003.5 629.5L1007 633L1010.5 629.5Z" fill="#333"/>
<rect x="999.5" y="308.5" width="14" height="181" rx="1.5" fill="url(#vth)" stroke="#8a8a8a"/><path d="M1004 394.5H1010M1004 397.5H1010M1004 400.5H1010" stroke="#555" stroke-width="1.2"/>
<rect x="57" y="642.5" width="939" height="15.5" fill="#eeeeee"/><rect x="57" y="642.5" width="939" height="1" fill="#dcdcdc"/><rect x="57" y="643.5" width="939" height="1" fill="#e6e6e6"/><rect x="57" y="657.5" width="939" height="1" fill="#e2e2e2"/><rect x="57" y="640" width="939" height="2.5" fill="#f6f6f6"/>
<path d="M67 647L63 650.5L67 654Z" fill="#8a8a8a"/><path d="M985.5 647L989.5 650.5L985.5 654Z" fill="#333"/>
<rect x="75.5" y="643.5" width="786" height="14" rx="1.5" fill="url(#hth)" stroke="#8a8a8a"/><path d="M465.5 647V655M468.5 647V655M471.5 647V655" stroke="#555" stroke-width="1.2"/>
<defs><linearGradient id="ct1" x1="0" y1="0" x2="1" y2=".6"><stop offset="0" stop-color="#1a9a2a"/><stop offset=".45" stop-color="#40b040"/><stop offset=".7" stop-color="#c08030"/><stop offset="1" stop-color="#c01818"/></linearGradient><linearGradient id="ct2" x1="0" y1="0" x2=".3" y2="1"><stop offset=".5" stop-color="#2040d0" stop-opacity="0"/><stop offset=".8" stop-color="#2a30d0" stop-opacity=".75"/><stop offset="1" stop-color="#3010a0"/></linearGradient><linearGradient id="ct3" x1="0" y1="0" x2="1" y2="0"><stop offset=".35" stop-color="#c020c0" stop-opacity="0"/><stop offset=".7" stop-color="#c020a0" stop-opacity=".7"/><stop offset="1" stop-color="#c01818" stop-opacity="0"/></linearGradient><pattern id="wck" width="2" height="2" patternUnits="userSpaceOnUse"><rect width="1" height="1" fill="#fff"/></pattern></defs><path d="M1002.2 643L1013.5 653.5L1003.5 659C1002 655 1001.5 648 1002.2 643Z" fill="url(#ct1)"/><path d="M1002.2 643L1013.5 653.5L1003.5 659C1002 655 1001.5 648 1002.2 643Z" fill="url(#ct2)"/><path d="M1004 652L1013.5 653.5L1003.5 659Z" fill="url(#ct3)"/><path d="M1002.2 643L1013.5 653.5L1003.5 659C1002 655 1001.5 648 1002.2 643Z" fill="url(#wck)" opacity=".8"/>
<rect x="0" y="662" width="1020" height="1" fill="#8e8e8e"/>
<path d="M7.7 3L15.4 10.3L12 12.5L10.5 16.5L8 18L5.5 16.5L4 12.5L0.4 10.3Z" fill="#000"/><path d="M7.7 4.6L12.5 9.2L10 10.5L7.5 9.5L4 10L3.5 9Z" fill="#f4f4f4"/><path d="M12.5 9.2L14.2 10.2L11 11.5Z" fill="#2a4a8a"/><g fill="#111"><rect x="1.5" y="15.5" width="2" height="1.2"/><rect x="13" y="13.5" width="2" height="1.2"/><rect x="13" y="16" width="1" height="1"/></g>
<text x="21" y="14.7" font-family="Liberation Sans" font-size="12.2" fill="#000" style="paint-order:stroke" stroke="#dfe6f4" stroke-width="2.5" stroke-opacity=".55">*New document 1 - Inkscape</text>
<text x="9" y="36.7" font-family="Liberation Sans" font-size="11.9" fill="#000"><tspan text-decoration="underline">F</tspan>ile</text><text x="39" y="36.7" font-family="Liberation Sans" font-size="11.9" fill="#000"><tspan text-decoration="underline">E</tspan>dit</text><text x="74" y="36.7" font-family="Liberation Sans" font-size="11.9" fill="#000"><tspan text-decoration="underline">V</tspan>iew</text><text x="113" y="36.7" font-family="Liberation Sans" font-size="11.9" fill="#000"><tspan text-decoration="underline">L</tspan>ayer</text><text x="155" y="36.7" font-family="Liberation Sans" font-size="11.9" fill="#000"><tspan text-decoration="underline">O</tspan>bject</text><text x="204" y="36.7" font-family="Liberation Sans" font-size="11.9" fill="#000"><tspan text-decoration="underline">P</tspan>ath</text><text x="242" y="36.7" font-family="Liberation Sans" font-size="11.9" fill="#000"><tspan text-decoration="underline">T</tspan>ext</text><text x="278" y="36.7" font-family="Liberation Sans" font-size="11.9" fill="#000">Filter<tspan text-decoration="underline">s</tspan></text><text x="323" y="36.7" font-family="Liberation Sans" font-size="11.9" fill="#000">Exte<tspan text-decoration="underline">n</tspan>sions</text><text x="391" y="36.7" font-family="Liberation Sans" font-size="11.9" fill="#000"><tspan text-decoration="underline">H</tspan>elp</text>
<g stroke="#000" stroke-width="1" shape-rendering="crispEdges">
<line x1="57.5" y1="150" x2="57.5" y2="154"/>
<line x1="64.5" y1="147" x2="64.5" y2="156"/>
<line x1="70.5" y1="150" x2="70.5" y2="156"/>
<line x1="77.5" y1="147" x2="77.5" y2="156"/>
<line x1="83.5" y1="150" x2="83.5" y2="156"/>
<line x1="90.5" y1="147" x2="90.5" y2="156"/>
<line x1="97.5" y1="150" x2="97.5" y2="156"/>
<line x1="103.5" y1="147" x2="103.5" y2="156"/>
<line x1="110.5" y1="150" x2="110.5" y2="156"/>
<line x1="117.5" y1="138" x2="117.5" y2="156"/>
<line x1="123.5" y1="150" x2="123.5" y2="156"/>
<line x1="130.5" y1="147" x2="130.5" y2="156"/>
<line x1="136.5" y1="150" x2="136.5" y2="156"/>
<line x1="143.5" y1="147" x2="143.5" y2="156"/>
<line x1="150.5" y1="150" x2="150.5" y2="156"/>
<line x1="156.5" y1="147" x2="156.5" y2="156"/>
<line x1="163.5" y1="150" x2="163.5" y2="156"/>
<line x1="169.5" y1="147" x2="169.5" y2="156"/>
<line x1="176.5" y1="150" x2="176.5" y2="156"/>
<line x1="183.5" y1="138" x2="183.5" y2="156"/>
<line x1="189.5" y1="150" x2="189.5" y2="156"/>
<line x1="196.5" y1="147" x2="196.5" y2="156"/>
<line x1="203.5" y1="150" x2="203.5" y2="156"/>
<line x1="209.5" y1="147" x2="209.5" y2="156"/>
<line x1="216.5" y1="150" x2="216.5" y2="156"/>
<line x1="222.5" y1="147" x2="222.5" y2="156"/>
<line x1="229.5" y1="150" x2="229.5" y2="156"/>
<line x1="236.5" y1="147" x2="236.5" y2="156"/>
<line x1="242.5" y1="150" x2="242.5" y2="156"/>
<line x1="249.5" y1="138" x2="249.5" y2="156"/>
<line x1="255.5" y1="150" x2="255.5" y2="156"/>
<line x1="262.5" y1="147" x2="262.5" y2="156"/>
<line x1="269.5" y1="150" x2="269.5" y2="156"/>
<line x1="275.5" y1="147" x2="275.5" y2="156"/>
<line x1="282.5" y1="150" x2="282.5" y2="156"/>
<line x1="289.5" y1="147" x2="289.5" y2="156"/>
<line x1="295.5" y1="150" x2="295.5" y2="156"/>
<line x1="302.5" y1="147" x2="302.5" y2="156"/>
<line x1="308.5" y1="150" x2="308.5" y2="156"/>
<line x1="315.5" y1="138" x2="315.5" y2="156"/>
<line x1="322.5" y1="150" x2="322.5" y2="156"/>
<line x1="328.5" y1="147" x2="328.5" y2="156"/>
<line x1="335.5" y1="150" x2="335.5" y2="156"/>
<line x1="341.5" y1="147" x2="341.5" y2="156"/>
<line x1="348.5" y1="150" x2="348.5" y2="156"/>
<line x1="355.5" y1="147" x2="355.5" y2="156"/>
<line x1="361.5" y1="150" x2="361.5" y2="156"/>
<line x1="368.5" y1="147" x2="368.5" y2="156"/>
<line x1="375.5" y1="150" x2="375.5" y2="156"/>
<line x1="381.5" y1="138" x2="381.5" y2="156"/>
<line x1="388.5" y1="150" x2="388.5" y2="156"/>
<line x1="394.5" y1="147" x2="394.5" y2="156"/>
<line x1="401.5" y1="150" x2="401.5" y2="156"/>
<line x1="408.5" y1="147" x2="408.5" y2="156"/>
<line x1="414.5" y1="150" x2="414.5" y2="156"/>
<line x1="421.5" y1="147" x2="421.5" y2="156"/>
<line x1="427.5" y1="150" x2="427.5" y2="156"/>
<line x1="434.5" y1="147" x2="434.5" y2="156"/>
<line x1="441.5" y1="150" x2="441.5" y2="156"/>
<line x1="447.5" y1="138" x2="447.5" y2="156"/>
<line x1="454.5" y1="150" x2="454.5" y2="156"/>
<line x1="461.5" y1="147" x2="461.5" y2="156"/>
<line x1="467.5" y1="150" x2="467.5" y2="156"/>
<line x1="474.5" y1="147" x2="474.5" y2="156"/>
<line x1="480.5" y1="150" x2="480.5" y2="156"/>
<line x1="487.5" y1="147" x2="487.5" y2="156"/>
<line x1="494.5" y1="150" x2="494.5" y2="156"/>
<line x1="500.5" y1="147" x2="500.5" y2="156"/>
<line x1="507.5" y1="150" x2="507.5" y2="156"/>
<line x1="513.5" y1="138" x2="513.5" y2="156"/>
<line x1="520.5" y1="150" x2="520.5" y2="156"/>
<line x1="527.5" y1="147" x2="527.5" y2="156"/>
<line x1="533.5" y1="150" x2="533.5" y2="156"/>
<line x1="540.5" y1="147" x2="540.5" y2="156"/>
<line x1="547.5" y1="150" x2="547.5" y2="156"/>
<line x1="553.5" y1="147" x2="553.5" y2="156"/>
<line x1="560.5" y1="150" x2="560.5" y2="156"/>
<line x1="566.5" y1="147" x2="566.5" y2="156"/>
<line x1="573.5" y1="150" x2="573.5" y2="156"/>
<line x1="580.5" y1="138" x2="580.5" y2="156"/>
<line x1="586.5" y1="150" x2="586.5" y2="156"/>
<line x1="593.5" y1="147" x2="593.5" y2="156"/>
<line x1="599.5" y1="150" x2="599.5" y2="156"/>
<line x1="606.5" y1="147" x2="606.5" y2="156"/>
<line x1="613.5" y1="150" x2="613.5" y2="156"/>
<line x1="619.5" y1="147" x2="619.5" y2="156"/>
<line x1="626.5" y1="150" x2="626.5" y2="156"/>
<line x1="633.5" y1="147" x2="633.5" y2="156"/>
<line x1="639.5" y1="150" x2="639.5" y2="156"/>
<line x1="646.5" y1="138" x2="646.5" y2="156"/>
<line x1="652.5" y1="150" x2="652.5" y2="156"/>
<line x1="659.5" y1="147" x2="659.5" y2="156"/>
<line x1="666.5" y1="150" x2="666.5" y2="156"/>
<line x1="672.5" y1="147" x2="672.5" y2="156"/>
<line x1="679.5" y1="150" x2="679.5" y2="156"/>
<line x1="685.5" y1="147" x2="685.5" y2="156"/>
<line x1="692.5" y1="150" x2="692.5" y2="156"/>
<line x1="699.5" y1="147" x2="699.5" y2="156"/>
<line x1="705.5" y1="150" x2="705.5" y2="156"/>
<line x1="712.5" y1="138" x2="712.5" y2="156"/>
<line x1="719.5" y1="150" x2="719.5" y2="156"/>
<line x1="725.5" y1="147" x2="725.5" y2="156"/>
<line x1="732.5" y1="150" x2="732.5" y2="156"/>
<line x1="738.5" y1="147" x2="738.5" y2="156"/>
<line x1="745.5" y1="150" x2="745.5" y2="156"/>
<line x1="752.5" y1="147" x2="752.5" y2="156"/>
<line x1="758.5" y1="150" x2="758.5" y2="156"/>
<line x1="765.5" y1="147" x2="765.5" y2="156"/>
<line x1="771.5" y1="150" x2="771.5" y2="156"/>
<line x1="778.5" y1="138" x2="778.5" y2="156"/>
<line x1="785.5" y1="150" x2="785.5" y2="156"/>
<line x1="791.5" y1="147" x2="791.5" y2="156"/>
<line x1="798.5" y1="150" x2="798.5" y2="156"/>
<line x1="805.5" y1="147" x2="805.5" y2="156"/>
<line x1="811.5" y1="150" x2="811.5" y2="156"/>
<line x1="818.5" y1="147" x2="818.5" y2="156"/>
<line x1="824.5" y1="150" x2="824.5" y2="156"/>
<line x1="831.5" y1="147" x2="831.5" y2="156"/>
<line x1="838.5" y1="150" x2="838.5" y2="156"/>
<line x1="844.5" y1="138" x2="844.5" y2="156"/>
<line x1="851.5" y1="150" x2="851.5" y2="156"/>
<line x1="857.5" y1="147" x2="857.5" y2="156"/>
<line x1="864.5" y1="150" x2="864.5" y2="156"/>
<line x1="871.5" y1="147" x2="871.5" y2="156"/>
<line x1="877.5" y1="150" x2="877.5" y2="156"/>
<line x1="884.5" y1="147" x2="884.5" y2="156"/>
<line x1="891.5" y1="150" x2="891.5" y2="156"/>
<line x1="897.5" y1="147" x2="897.5" y2="156"/>
<line x1="904.5" y1="150" x2="904.5" y2="156"/>
<line x1="910.5" y1="138" x2="910.5" y2="156"/>
<line x1="917.5" y1="150" x2="917.5" y2="156"/>
<line x1="924.5" y1="147" x2="924.5" y2="156"/>
<line x1="930.5" y1="150" x2="930.5" y2="156"/>
<line x1="937.5" y1="147" x2="937.5" y2="156"/>
<line x1="943.5" y1="150" x2="943.5" y2="156"/>
<line x1="950.5" y1="147" x2="950.5" y2="156"/>
<line x1="957.5" y1="150" x2="957.5" y2="156"/>
<line x1="963.5" y1="147" x2="963.5" y2="156"/>
<line x1="970.5" y1="150" x2="970.5" y2="156"/>
<line x1="977.5" y1="138" x2="977.5" y2="156"/>
<line x1="983.5" y1="150" x2="983.5" y2="156"/>
<line x1="990.5" y1="147" x2="990.5" y2="156"/>
<line x1="59" y1="155.5" x2="994" y2="155.5"/>
<line x1="47" y1="162.5" x2="56" y2="162.5"/>
<line x1="50" y1="168.5" x2="56" y2="168.5"/>
<line x1="38" y1="175.5" x2="56" y2="175.5"/>
<line x1="50" y1="182.5" x2="56" y2="182.5"/>
<line x1="47" y1="188.5" x2="56" y2="188.5"/>
<line x1="50" y1="195.5" x2="56" y2="195.5"/>
<line x1="47" y1="202.5" x2="56" y2="202.5"/>
<line x1="50" y1="208.5" x2="56" y2="208.5"/>
<line x1="47" y1="215.5" x2="56" y2="215.5"/>
<line x1="50" y1="221.5" x2="56" y2="221.5"/>
<line x1="47" y1="228.5" x2="56" y2="228.5"/>
<line x1="50" y1="235.5" x2="56" y2="235.5"/>
<line x1="38" y1="241.5" x2="56" y2="241.5"/>
<line x1="50" y1="248.5" x2="56" y2="248.5"/>
<line x1="47" y1="254.5" x2="56" y2="254.5"/>
<line x1="50" y1="261.5" x2="56" y2="261.5"/>
<line x1="47" y1="268.5" x2="56" y2="268.5"/>
<line x1="50" y1="274.5" x2="56" y2="274.5"/>
<line x1="47" y1="281.5" x2="56" y2="281.5"/>
<line x1="50" y1="288.5" x2="56" y2="288.5"/>
<line x1="47" y1="294.5" x2="56" y2="294.5"/>
<line x1="50" y1="301.5" x2="56" y2="301.5"/>
<line x1="38" y1="307.5" x2="56" y2="307.5"/>
<line x1="50" y1="314.5" x2="56" y2="314.5"/>
<line x1="47" y1="321.5" x2="56" y2="321.5"/>
<line x1="50" y1="327.5" x2="56" y2="327.5"/>
<line x1="47" y1="334.5" x2="56" y2="334.5"/>
<line x1="50" y1="340.5" x2="56" y2="340.5"/>
<line x1="47" y1="347.5" x2="56" y2="347.5"/>
<line x1="50" y1="354.5" x2="56" y2="354.5"/>
<line x1="47" y1="360.5" x2="56" y2="360.5"/>
<line x1="50" y1="367.5" x2="56" y2="367.5"/>
<line x1="38" y1="374.5" x2="56" y2="374.5"/>
<line x1="50" y1="380.5" x2="56" y2="380.5"/>
<line x1="47" y1="387.5" x2="56" y2="387.5"/>
<line x1="50" y1="393.5" x2="56" y2="393.5"/>
<line x1="47" y1="400.5" x2="56" y2="400.5"/>
<line x1="50" y1="407.5" x2="56" y2="407.5"/>
<line x1="47" y1="413.5" x2="56" y2="413.5"/>
<line x1="50" y1="420.5" x2="56" y2="420.5"/>
<line x1="47" y1="426.5" x2="56" y2="426.5"/>
<line x1="50" y1="433.5" x2="56" y2="433.5"/>
<line x1="38" y1="440.5" x2="56" y2="440.5"/>
<line x1="50" y1="446.5" x2="56" y2="446.5"/>
<line x1="47" y1="453.5" x2="56" y2="453.5"/>
<line x1="50" y1="460.5" x2="56" y2="460.5"/>
<line x1="47" y1="466.5" x2="56" y2="466.5"/>
<line x1="50" y1="473.5" x2="56" y2="473.5"/>
<line x1="47" y1="479.5" x2="56" y2="479.5"/>
<line x1="50" y1="486.5" x2="56" y2="486.5"/>
<line x1="47" y1="493.5" x2="56" y2="493.5"/>
<line x1="50" y1="499.5" x2="56" y2="499.5"/>
<line x1="38" y1="506.5" x2="56" y2="506.5"/>
<line x1="50" y1="512.5" x2="56" y2="512.5"/>
<line x1="47" y1="519.5" x2="56" y2="519.5"/>
<line x1="50" y1="526.5" x2="56" y2="526.5"/>
<line x1="47" y1="532.5" x2="56" y2="532.5"/>
<line x1="50" y1="539.5" x2="56" y2="539.5"/>
<line x1="47" y1="546.5" x2="56" y2="546.5"/>
<line x1="50" y1="552.5" x2="56" y2="552.5"/>
<line x1="47" y1="559.5" x2="56" y2="559.5"/>
<line x1="50" y1="565.5" x2="56" y2="565.5"/>
<line x1="38" y1="572.5" x2="56" y2="572.5"/>
<line x1="50" y1="579.5" x2="56" y2="579.5"/>
<line x1="47" y1="585.5" x2="56" y2="585.5"/>
<line x1="50" y1="592.5" x2="56" y2="592.5"/>
<line x1="47" y1="598.5" x2="56" y2="598.5"/>
<line x1="50" y1="605.5" x2="56" y2="605.5"/>
<line x1="47" y1="612.5" x2="56" y2="612.5"/>
<line x1="50" y1="618.5" x2="56" y2="618.5"/>
<line x1="47" y1="625.5" x2="56" y2="625.5"/>
<line x1="50" y1="632.5" x2="56" y2="632.5"/>
<line x1="38" y1="638.5" x2="56" y2="638.5"/>
<line x1="55.5" y1="158.5" x2="55.5" y2="639"/>
</g>
<g font-family="Liberation Sans" font-size="8.4" fill="#000" stroke="#000" stroke-width="0.15" letter-spacing="-0.6">
<text x="57.0" y="145.8">400</text>
<text x="119.2" y="145.8">-350</text>
<text x="185.2" y="145.8">-300</text>
<text x="251.2" y="145.8">-250</text>
<text x="317.2" y="145.8">-200</text>
<text x="383.2" y="145.8">-150</text>
<text x="449.2" y="145.8">-100</text>
<text x="515.2" y="145.8">-50</text>
<text x="582.2" y="145.8">0</text>
<text x="648.2" y="145.8">50</text>
<text x="714.2" y="145.8">100</text>
<text x="780.2" y="145.8">150</text>
<text x="846.2" y="145.8">200</text>
<text x="912.2" y="145.8">250</text>
<text x="979.2" y="145.8">300</text>
</g>
<g font-family="Liberation Sans" font-size="8.6" fill="#000" stroke="#000" stroke-width="0.15" text-anchor="middle">
<text x="40.5" y="183.0">3</text>
<text x="40.5" y="191.0">0</text>
<text x="40.5" y="199.0">0</text>
<text x="40.5" y="249.0">2</text>
<text x="40.5" y="257.0">5</text>
<text x="40.5" y="265.0">0</text>
<text x="40.5" y="315.0">2</text>
<text x="40.5" y="323.0">0</text>
<text x="40.5" y="331.0">0</text>
<text x="40.5" y="382.0">1</text>
<text x="40.5" y="390.0">5</text>
<text x="40.5" y="398.0">0</text>
<text x="40.5" y="448.0">1</text>
<text x="40.5" y="456.0">0</text>
<text x="40.5" y="464.0">0</text>
<text x="40.5" y="514.0">5</text>
<text x="40.5" y="522.0">0</text>
<text x="40.5" y="580.0">0</text>
</g>
</svg>

<svg style="left:0;top:0" width="1020" height="663" viewBox="0 0 1020 663">
<defs>
<mask id="dm" maskUnits="userSpaceOnUse" x="0" y="0" width="1020" height="663">
<rect x="0" y="0" width="1020" height="663" fill="#fff"/>
<circle cx="573" cy="372.5" r="49.5" fill="#000"/>
<g fill="#000"><circle cx="659.3" cy="217.6" r="19.8"/><circle cx="702.4" cy="259.4" r="33.3"/><circle cx="746.7" cy="301.2" r="22.2"/></g>
</mask>
<mask id="sm" maskUnits="userSpaceOnUse" x="0" y="0" width="1020" height="663">
<g fill="#fff"><circle cx="656.8" cy="220.6" r="27.3"/><circle cx="699.9" cy="262.4" r="40.8"/><circle cx="744.2" cy="304.2" r="29.7"/></g><g fill="#000"><circle cx="656.8" cy="220.6" r="22.3"/><circle cx="699.9" cy="262.4" r="35.8"/><circle cx="744.2" cy="304.2" r="24.7"/></g>
</mask>
</defs>
<circle cx="575" cy="367" r="166" fill="#ffb07f" mask="url(#dm)"/>
<clipPath id="dc"><circle cx="575" cy="367" r="166"/></clipPath>
<g clip-path="url(#dc)"><g mask="url(#dm)"><rect x="600" y="180" width="180" height="180" fill="#000" mask="url(#sm)"/></g></g>
<path d="M740.4 333.7 A172.2 172.2 0 0 1 744.3 383 C743.0 393.3 739.3 417.3 737.0 427.0 C734.7 436.7 732.9 437.8 730.5 441.0 C728.1 444.2 725.3 446.2 722.5 446.5 C719.7 446.8 716.3 445.2 713.5 443.0 C710.7 440.8 708.1 440.5 705.5 433.0 C702.9 425.5 700.0 408.8 698.0 398.0 C696.0 387.2 696.4 374.8 693.7 368.0 C691.0 361.2 686.5 356.8 682.0 357.4 C677.5 358.0 669.8 363.9 666.4 371.5 C663.0 379.1 663.3 394.8 661.4 403.0 C659.5 411.2 658.4 416.7 654.8 421.0 C651.2 425.3 644.6 429.2 639.9 428.7 C635.2 428.2 629.6 423.1 626.6 418.0 C623.6 412.9 622.5 404.7 621.6 398.0 C620.7 391.3 621.6 385.2 621.0 378.0 C620.4 370.8 620.3 361.2 617.8 355.0 A48 48 0 0 0 529.6 349.2 C526.7 354.7 525.5 363.0 524.7 368.8 C523.9 374.6 526.3 378.5 525.0 384.0 C523.7 389.5 520.3 397.0 516.8 402.0 C513.2 407.0 507.8 416.1 503.7 413.8 C499.6 411.5 495.3 395.4 492.0 388.4 C488.7 381.4 487.3 376.0 483.8 372.0 C480.3 368.0 475.8 364.9 470.8 364.4 C465.8 363.9 458.3 365.7 453.6 369.0 C448.9 372.3 444.9 378.5 442.7 384.0 C440.5 389.5 441.6 396.7 440.6 402.0 C439.7 407.3 439.4 412.9 437.0 416.0 C434.6 419.1 430.2 420.6 426.0 420.8 C421.8 421.0 415.6 419.5 412.0 417.0 C408.4 414.5 406.1 410.3 404.5 406.0 C402.9 401.7 402.7 396.2 402.2 391.0 A172.2 172.2 0 0 1 631 211.9 A27.3 27.3 0 0 0 662.4 247.4 A40.8 40.8 0 0 0 714.7 300.5 A29.7 29.7 0 0 0 740.4 333.7 Z" fill="#2a0000" stroke="#7a5418" stroke-width="3.6" stroke-linejoin="round"/>
<g stroke="#e14b4d" stroke-width="8" stroke-linecap="round"><line x1="494.0" y1="241.3" x2="510.7" y2="254.9" stroke-width="8.0"/><line x1="543.8" y1="239.8" x2="554.4" y2="229.2" stroke-width="7.0"/><line x1="571.0" y1="270.0" x2="587.6" y2="273.0" stroke-width="7.0"/><line x1="448.8" y1="273.0" x2="453.3" y2="286.5" stroke-width="6.3"/><line x1="486.5" y1="302.2" x2="497.0" y2="302.2" stroke-width="5.3"/><line x1="538.4" y1="315.2" x2="545.4" y2="307.0" stroke-width="5.5"/><line x1="446.7" y1="338.4" x2="463.3" y2="341.7" stroke-width="7.0"/><line x1="415.6" y1="360.4" x2="420.2" y2="377.0" stroke-width="7.5"/><line x1="495.6" y1="363.5" x2="503.0" y2="370.4" stroke-width="5.8"/><line x1="591.7" y1="233.7" x2="603.7" y2="236.2" stroke-width="5.8"/><line x1="617.3" y1="295.6" x2="624.9" y2="287.1" stroke-width="6.5"/><line x1="644.5" y1="288.0" x2="655.0" y2="298.6" stroke-width="7.0"/><line x1="621.8" y1="330.3" x2="626.4" y2="339.3" stroke-width="5.3"/><line x1="662.6" y1="331.8" x2="679.2" y2="336.3" stroke-width="7.0"/><line x1="719.9" y1="371.0" x2="735.0" y2="362.0" stroke-width="7.5"/><line x1="634.0" y1="385.0" x2="652.0" y2="389.0" stroke-width="8.0"/><line x1="705.4" y1="395.6" x2="712.0" y2="404.7" stroke-width="5.5"/></g>
</svg>
</body></html>
